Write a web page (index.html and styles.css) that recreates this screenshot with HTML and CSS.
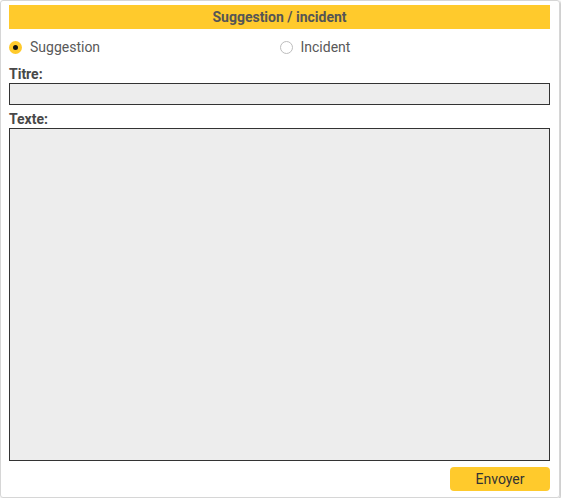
FILE: index.html
```html
<!DOCTYPE html>
<html lang="fr">
<head>
<meta charset="utf-8">
<title>Suggestion / incident</title>
<link rel="stylesheet" href="styles.css">
</head>
<body>
<form class="dialog">
  <div class="dialog-title">Suggestion / incident</div>
  <div class="choices">
    <label class="choice"><input type="radio" name="kind" class="radio" checked><span>Suggestion</span></label>
    <label class="choice"><input type="radio" name="kind" class="radio"><span>Incident</span></label>
  </div>
  <label class="field-label" for="titre">Titre:</label>
  <input id="titre" class="field-input" type="text">
  <label class="field-label field-label-text" for="texte">Texte:</label>
  <textarea id="texte" class="field-textarea"></textarea>
  <div class="actions">
    <button type="button" class="btn-send">Envoyer</button>
  </div>
</form>
</body>
</html>
```
FILE: styles.css
```css
html, body {
  margin: 0;
  padding: 0;
  background: #ffffff;
}
body {
  font-family: Roboto, "Liberation Sans", sans-serif;
  font-size: 14px;
  color: #555;
}
.dialog {
  box-sizing: border-box;
  width: 560px;
  height: 498px;
  margin: 0;
  padding: 4px 9px 6px 8px;
  border: 1px solid #d6d6d6;
  border-radius: 3px;
  box-shadow: 1px 1px 2px rgba(0, 0, 0, 0.25);
  display: flex;
  flex-direction: column;
}
.dialog-title {
  height: 24px;
  line-height: 24px;
  background: #ffca2c;
  text-align: center;
  font-weight: bold;
  color: #555;
}
.choices {
  display: grid;
  grid-template-columns: 1fr 1fr;
  margin-top: 8px;
  height: 20px;
}
.choice {
  display: flex;
  align-items: center;
  gap: 8px;
  line-height: 20px;
  color: #595959;
}
.radio {
  appearance: none;
  -webkit-appearance: none;
  box-sizing: border-box;
  width: 13px;
  height: 13px;
  margin: 0;
  border-radius: 50%;
  border: 1px solid #bdbdbd;
  background: #fff;
}
.radio:checked {
  border: 4px solid #ffca2c;
  background: #111;
}
.field-label {
  display: block;
  font-weight: bold;
  color: #484848;
  line-height: 16px;
  margin-top: 9px;
  margin-bottom: 1px;
}
.field-label-text {
  margin-top: 6px;
}
.field-input,
.field-textarea {
  box-sizing: border-box;
  width: 100%;
  margin: 0;
  background: #ededed;
  border: 1px solid #333;
  border-radius: 0;
  font-family: inherit;
  font-size: 14px;
}
.field-input {
  height: 22px;
}
.field-textarea {
  height: 333px;
  resize: none;
}
.actions {
  display: flex;
  justify-content: flex-end;
  margin-top: 6px;
}
.btn-send {
  width: 100px;
  height: 24px;
  border: none;
  border-radius: 4px;
  background: #ffca2c;
  color: #333;
  font-family: inherit;
  font-size: 14px;
  padding: 0;
}
```
